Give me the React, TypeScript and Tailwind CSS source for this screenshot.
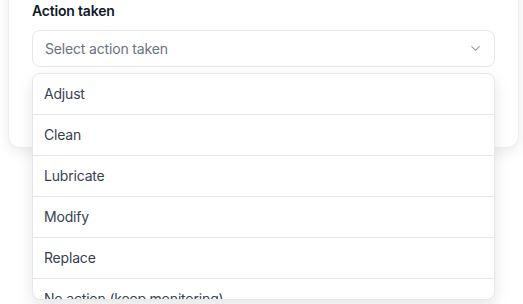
import { ChevronDown } from 'lucide-react'

const ACTIONS = ['Adjust', 'Clean', 'Lubricate', 'Modify', 'Replace', 'No action (keep monitoring)', 'Other']

export default function App() {
  return (
    <div className="h-[304px] w-[523px] overflow-hidden bg-white font-['Inter',sans-serif] tracking-[-0.012em]">
      <div className="relative mx-2 -mt-5 w-[511px] rounded-xl border border-gray-200/70 bg-white px-[23px] pb-[80px] pt-[20px] shadow-[0_4px_14px_rgba(0,0,0,0.08)]">
        <label className="block text-sm font-semibold leading-5 text-gray-900">Action taken</label>

        <div className="relative mt-[9px]">
          <button className="flex h-[37px] w-full items-center justify-between rounded-lg border border-gray-200 bg-white pl-3 pr-[11px] text-left text-sm tracking-[-0.012em] text-gray-500">
            <span>Select action taken</span>
            <ChevronDown size={15} strokeWidth={2} className="text-gray-400" />
          </button>

          <ul className="absolute left-0 right-0 top-[43px] z-10 h-[227px] overflow-hidden rounded-lg border border-gray-200 bg-white shadow-[0_6px_16px_rgba(0,0,0,0.1)]">
            {ACTIONS.map((action, i) => (
              <li
                key={action}
                className={`pl-[11px] pr-3 py-2.5 text-sm leading-5 text-gray-700 ${i > 0 ? 'border-t border-gray-200' : ''}`}
              >
                {action}
              </li>
            ))}
          </ul>
        </div>
      </div>
    </div>
  )
}
